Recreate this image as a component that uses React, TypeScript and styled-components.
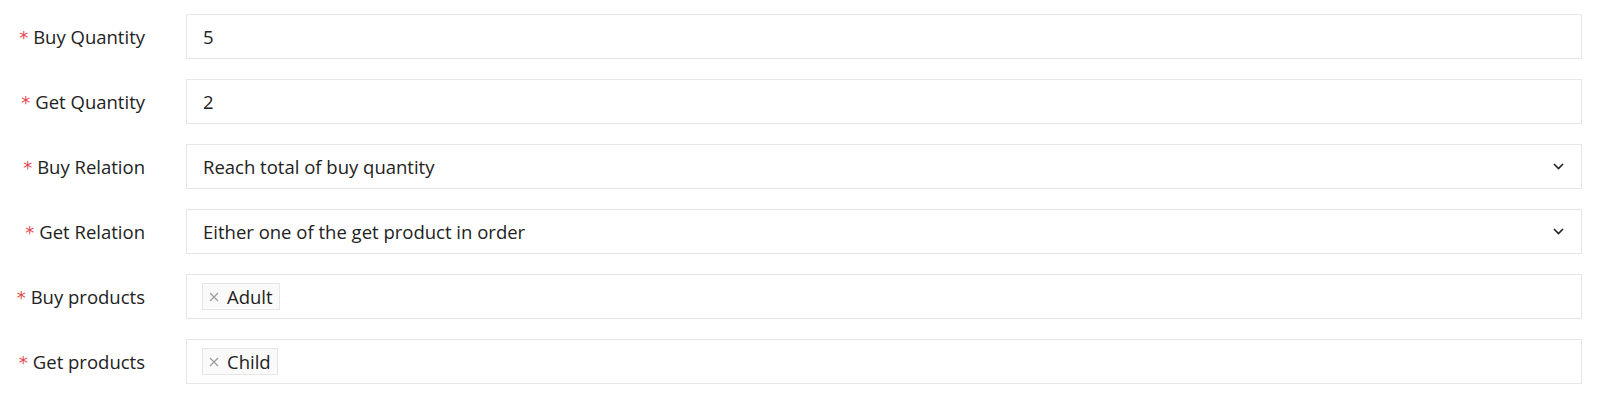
import React from "react";
import styled, { createGlobalStyle } from "styled-components";

const GlobalStyle = createGlobalStyle`
  body {
    margin: 0;
    background: #ffffff;
    font-family: "Open Sans", "Noto Sans", sans-serif;
    color: #222222;
  }
`;

const Form = styled.form`
  display: flex;
  flex-direction: column;
  gap: 20px;
  padding: 14px 18px 0 0;
`;

const Row = styled.div`
  display: grid;
  grid-template-columns: 186px 1fr;
  align-items: center;
`;

const Label = styled.label`
  justify-self: end;
  padding-right: 41px;
  font-size: 18.5px;
  color: #222222;
  white-space: nowrap;
`;

const Star = styled.span`
  color: #e4474d;
  margin-right: 5px;
  font-family: "DejaVu Sans", sans-serif;
  font-size: 18px;
`;

const Field = styled.div`
  box-sizing: border-box;
  height: 45px;
  border: 1px solid #e6e6e6;
  background: #ffffff;
  display: flex;
  align-items: center;
  padding: 0 17px 0 ${(p: { $tags?: boolean }) => (p.$tags ? "15px" : "16px")};
  font-size: 18.5px;
  color: #222222;
`;

const Value = styled.span`
  flex: 1;
`;

const Chevron = styled.svg`
  width: 11px;
  height: 7px;
  flex: none;
`;

const Tag = styled.span`
  display: inline-flex;
  align-items: center;
  box-sizing: border-box;
  height: 27px;
  padding: 0 6px 0 6px;
  gap: 8px;
  border: 1px solid #e6e6e6;
  background: #fafafa;
  font-size: 18.5px;
  color: #222222;
`;

const Close = styled.svg`
  width: 10px;
  height: 10px;
`;

const Required = ({ children }: { children: React.ReactNode }) => (
  <Label>
    <Star>*</Star>
    {children}
  </Label>
);

const SelectBox = ({ value }: { value: string }) => (
  <Field>
    <Value>{value}</Value>
    <Chevron viewBox="0 0 11 7">
      <polyline points="1,1 5.5,5.5 10,1" fill="none" stroke="#222" strokeWidth="1.6" />
    </Chevron>
  </Field>
);

const TagBox = ({ tags }: { tags: string[] }) => (
  <Field $tags>
    {tags.map((t) => (
      <Tag key={t}>
        <Close viewBox="0 0 10 10">
          <path d="M1 1L9 9M9 1L1 9" stroke="#9a9a9a" strokeWidth="1.1" />
        </Close>
        {t}
      </Tag>
    ))}
  </Field>
);

export default function App() {
  return (
    <>
      <GlobalStyle />
      <Form>
        <Row>
          <Required>Buy Quantity</Required>
          <Field>5</Field>
        </Row>
        <Row>
          <Required>Get Quantity</Required>
          <Field>2</Field>
        </Row>
        <Row>
          <Required>Buy Relation</Required>
          <SelectBox value="Reach total of buy quantity" />
        </Row>
        <Row>
          <Required>Get Relation</Required>
          <SelectBox value="Either one of the get product in order" />
        </Row>
        <Row>
          <Required>Buy products</Required>
          <TagBox tags={["Adult"]} />
        </Row>
        <Row>
          <Required>Get products</Required>
          <TagBox tags={["Child"]} />
        </Row>
      </Form>
    </>
  );
}
